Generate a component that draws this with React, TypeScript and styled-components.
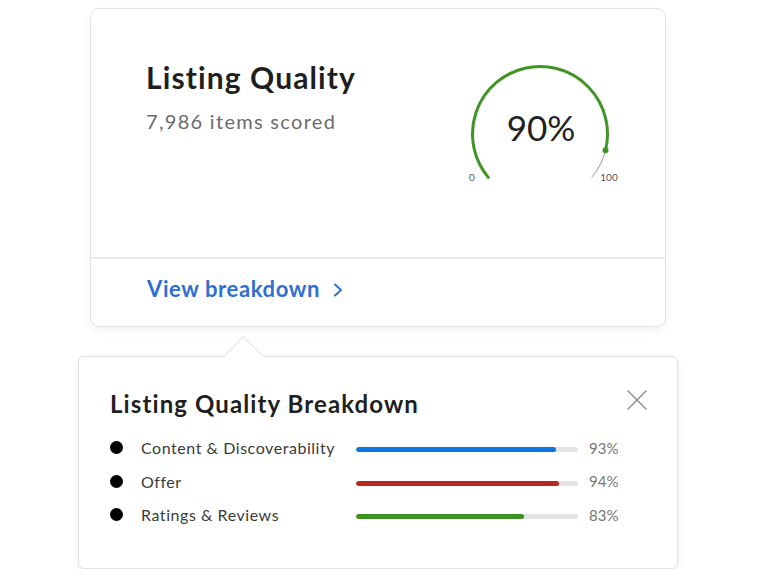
import React from "react";
import styled, { createGlobalStyle } from "styled-components";

type Breakdown = {
  label: string;
  value: number;
  fill: number;
  color: string;
};

const rows: Breakdown[] = [
  { label: "Content & Discoverability", value: 93, fill: 90, color: "#0a76e0" },
  { label: "Offer", value: 94, fill: 91.5, color: "#b42a20" },
  { label: "Ratings & Reviews", value: 83, fill: 75.7, color: "#3c9322" },
];

const polar = (cx: number, cy: number, r: number, deg: number) => {
  const a = (deg * Math.PI) / 180;
  return [cx + r * Math.cos(a), cy + r * Math.sin(a)];
};

const Gauge: React.FC<{ value: number }> = ({ value }) => {
  const cx = 75;
  const cy = 74;
  const r = 67.5;
  const start = 140;
  const span = 260;
  const endAngle = start + (span * value) / 100;
  const [sx, sy] = polar(cx, cy, r, start);
  const [ex, ey] = polar(cx, cy, r, endAngle);
  const [tx, ty] = polar(cx, cy, r, start + span);
  const large = (span * value) / 100 > 180 ? 1 : 0;

  return (
    <GaugeSvg width="160" height="128" viewBox="0 0 160 128">
      <path
        d={`M ${ex} ${ey} A ${r} ${r} 0 0 1 ${tx} ${ty}`}
        fill="none"
        stroke="#9a9a9a"
        strokeWidth="1"
      />
      <path
        d={`M ${sx} ${sy} A ${r} ${r} 0 ${large} 1 ${ex} ${ey}`}
        fill="none"
        stroke="#3f9425"
        strokeWidth="3"
        strokeLinecap="round"
      />
      <circle cx={ex} cy={ey} r="3" fill="#3f9425" />
      <GaugeValue x={cx + 1} y="81" textAnchor="middle">
        {value}%
      </GaugeValue>
      <GaugeLabel x="7" y="121" textAnchor="middle">
        0
      </GaugeLabel>
      <GaugeLabel x="144" y="121" textAnchor="middle">
        100
      </GaugeLabel>
    </GaugeSvg>
  );
};

const App: React.FC = () => {
  return (
    <>
      <GlobalStyle />
      <Page>
        <ScoreCard>
          <ScoreBody>
            <Heading>
              <Title>Listing Quality</Title>
              <Subtitle>7,986 items scored</Subtitle>
            </Heading>
            <Gauge value={90} />
          </ScoreBody>
          <ScoreFooter>
            <BreakdownLink href="#">
              View breakdown
              <svg width="12" height="16" viewBox="0 0 12 16">
                <path
                  d="M3 2.5 L9 8 L3 13.5"
                  fill="none"
                  stroke="#2f6fd3"
                  strokeWidth="2"
                  strokeLinecap="round"
                  strokeLinejoin="round"
                />
              </svg>
            </BreakdownLink>
          </ScoreFooter>
        </ScoreCard>

        <Popover>
          <PopoverHeader>
            <PopoverTitle>Listing Quality Breakdown</PopoverTitle>
            <CloseButton aria-label="Close">
              <svg width="20" height="20" viewBox="0 0 20 20">
                <path
                  d="M1 1 L19 19 M19 1 L1 19"
                  stroke="#8a8a8a"
                  strokeWidth="1.4"
                  strokeLinecap="round"
                />
              </svg>
            </CloseButton>
          </PopoverHeader>
          <RowList>
            {rows.map((row) => (
              <Row key={row.label}>
                <Bullet />
                <RowLabel>{row.label}</RowLabel>
                <Track>
                  <Fill $color={row.color} style={{ width: `${row.fill}%` }} />
                </Track>
                <Percent>{row.value}%</Percent>
              </Row>
            ))}
          </RowList>
        </Popover>
      </Page>
    </>
  );
};

export default App;

const GlobalStyle = createGlobalStyle`
  body {
    margin: 0;
    background: #ffffff;
    font-family: Lato, "Open Sans", Arial, sans-serif;
    color: #222;
  }
`;

const Page = styled.div`
  display: flex;
  flex-direction: column;
  align-items: flex-start;
  padding-top: 8px;
`;

const ScoreCard = styled.section`
  margin-left: 90px;
  width: 576px;
  box-sizing: border-box;
  border: 1px solid #e4e4e4;
  border-radius: 9px;
  background: #fff;
  box-shadow: 0 4px 10px rgba(0, 0, 0, 0.05);
  display: flex;
  flex-direction: column;
`;

const ScoreBody = styled.div`
  height: 250px;
  box-sizing: border-box;
  display: flex;
  align-items: flex-start;
  justify-content: space-between;
  padding: 50px 40px 0 55px;
  border-bottom: 2px solid #ebebeb;
`;

const Heading = styled.div`
  display: flex;
  flex-direction: column;
`;

const Title = styled.h1`
  margin: 0;
  font-size: 30px;
  line-height: 1.2;
  font-weight: 700;
  color: #1f1f1f;
  letter-spacing: 1.1px;
`;

const Subtitle = styled.p`
  margin: 14px 0 0;
  font-size: 20px;
  line-height: 1.2;
  color: #6b6b6b;
  letter-spacing: 1.3px;
`;

const GaugeSvg = styled.svg`
  display: block;
  margin-top: 1px;
`;

const GaugeValue = styled.text`
  font-family: Lato, sans-serif;
  font-size: 35px;
  fill: #222;
`;

const GaugeLabel = styled.text`
  font-family: Lato, sans-serif;
  font-size: 10px;
  fill: #555;
`;

const ScoreFooter = styled.div`
  height: 67px;
  box-sizing: border-box;
  padding: 17px 0 0 56px;
  display: flex;
  align-items: flex-start;
`;

const BreakdownLink = styled.a`
  display: flex;
  align-items: center;
  gap: 12px;
  font-size: 22px;
  line-height: 1.2;
  font-weight: 700;
  color: #2f6fd3;
  text-decoration: none;
  letter-spacing: 0.6px;

  svg {
    margin-top: 2px;
  }
`;

const Popover = styled.section`
  position: relative;
  margin: 29px 0 0 78px;
  width: 600px;
  height: 213px;
  box-sizing: border-box;
  border: 1px solid #e2e2e2;
  border-radius: 6px;
  background: #fff;
  box-shadow: 0 2px 6px rgba(0, 0, 0, 0.07);
  padding: 33px 30px 0 31px;

  &::before {
    content: "";
    position: absolute;
    top: -15px;
    left: 150px;
    width: 28px;
    height: 28px;
    background: #fff;
    border-top: 1px solid #e2e2e2;
    border-left: 1px solid #e2e2e2;
    transform: rotate(45deg);
  }
`;

const PopoverHeader = styled.div`
  display: flex;
  justify-content: space-between;
  align-items: flex-start;
`;

const PopoverTitle = styled.h2`
  margin: 0;
  font-size: 24px;
  line-height: 1.2;
  font-weight: 700;
  color: #1f1f1f;
  letter-spacing: 1.1px;
`;

const CloseButton = styled.button`
  border: none;
  background: none;
  padding: 0;
  margin-top: 0;
  cursor: pointer;
  display: flex;
`;

const RowList = styled.ul`
  list-style: none;
  margin: 12px 0 0;
  padding: 0;
`;

const Row = styled.li`
  display: flex;
  align-items: center;
  height: 33.5px;
`;

const Bullet = styled.span`
  width: 13px;
  height: 13px;
  border-radius: 50%;
  background: #000;
  margin-right: 18px;
  flex-shrink: 0;
`;

const RowLabel = styled.span`
  width: 215px;
  font-size: 16px;
  color: #3a3a3a;
  letter-spacing: 0.55px;
`;

const Track = styled.div`
  width: 222px;
  height: 5px;
  border-radius: 3px;
  background: #e3e3e3;
  margin-top: 4px;
  overflow: hidden;
`;

const Fill = styled.div<{ $color: string }>`
  height: 100%;
  border-radius: 3px;
  background: ${(p) => p.$color};
`;

const Percent = styled.span`
  margin-left: 11px;
  font-size: 15px;
  color: #777;
`;
